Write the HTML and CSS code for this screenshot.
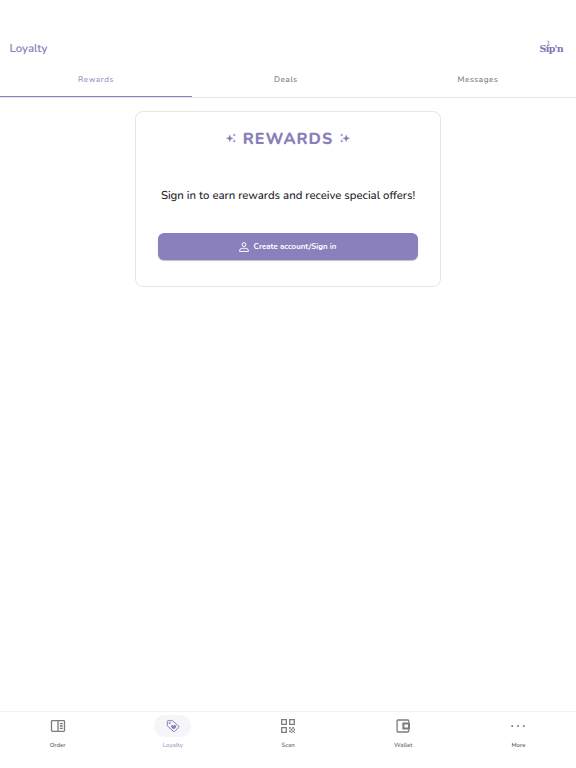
FILE: index.html
```
<!DOCTYPE html>
<html lang="en">
<head>
    <meta charset="UTF-8">
    <meta name="viewport" content="width=device-width, initial-scale=1.0">
    <title>Loyalty</title>
    <link rel="stylesheet" href="styles.css">
</head>
<body>
    <header class="header">
        <h1 class="page-title">Loyalty</h1>
        <div class="logo">
            <svg class="logo-steam" viewBox="0 0 6 8"><path d="M1.5 .8 4 2 2 4l2 1-1 2"/></svg>
            <span>Sip'n</span>
        </div>
    </header>

    <nav class="tabs">
        <a class="tab active" href="#"><span>Rewards</span></a>
        <a class="tab deals" href="#"><span>Deals</span></a>
        <a class="tab messages" href="#"><span>Messages</span></a>
    </nav>

    <main class="content">
        <section class="card">
            <div class="card-heading">
                <svg class="sparkle" viewBox="0 0 10 10"><path d="M3.8 1.5 4.9 4.2 7.6 5.3 4.9 6.4 3.8 9.1 2.7 6.4 0 5.3 2.7 4.2zM8.2 .2 8.7 1.4 9.9 1.9 8.7 2.4 8.2 3.6 7.7 2.4 6.5 1.9 7.7 1.4zM8.2 6.4 8.7 7.6 9.9 8.1 8.7 8.6 8.2 9.8 7.7 8.6 6.5 8.1 7.7 7.6z"/></svg>
                <h2>REWARDS</h2>
                <svg class="sparkle flipped" viewBox="0 0 10 10"><path d="M3.8 1.5 4.9 4.2 7.6 5.3 4.9 6.4 3.8 9.1 2.7 6.4 0 5.3 2.7 4.2zM8.2 .2 8.7 1.4 9.9 1.9 8.7 2.4 8.2 3.6 7.7 2.4 6.5 1.9 7.7 1.4zM8.2 6.4 8.7 7.6 9.9 8.1 8.7 8.6 8.2 9.8 7.7 8.6 6.5 8.1 7.7 7.6z"/></svg>
            </div>
            <p class="card-text">Sign in to earn rewards and receive special offers!</p>
            <button class="signin-button">
                <svg class="person" viewBox="0 0 10 10"><circle cx="5" cy="2.6" r="1.9"/><path d="M.6 9.4V8.2C.6 6.9 3 6.2 5 6.2s4.4.7 4.4 2v1.2z"/></svg>
                <span>Create account/Sign in</span>
            </button>
        </section>
    </main>

    <nav class="bottom-nav">
        <a class="nav-item" href="#">
            <span class="nav-icon">
                <svg viewBox="0 0 16 16"><path d="M2.3 2.7h11.4q.8 0 .8.8v9q0 .8-.8.8H2.3q-.8 0-.8-.8v-9q0-.8.8-.8zM8 2.7v10.6M9.8 5.6h3M9.8 8h3M9.8 10.4h3"/></svg>
            </span>
            <span class="nav-label">Order</span>
        </a>
        <a class="nav-item active" href="#">
            <span class="nav-icon">
                <svg viewBox="0 0 16 16"><path d="M2.9 2.7h4.6l6.3 5.6q.5.5 0 1L9.6 13.5q-.5.5-1 0L2.3 7.8V3.3q0-.6.6-.6z"/><circle class="solid" cx="4.7" cy="5" r=".9"/><path class="solid" d="M8.7 11.6 6.3 9.2C5.4 7.6 7.7 6.2 8.7 7.8c1-1.6 3.3-.2 2.4 1.4z"/></svg>
            </span>
            <span class="nav-label">Loyalty</span>
        </a>
        <a class="nav-item" href="#">
            <span class="nav-icon">
                <svg viewBox="0 0 16 16"><path d="M1.7 1.7h4.6v4.6H1.7zM9.7 1.7h4.6v4.6H9.7zM1.7 9.7h4.6v4.6H1.7z"/><path class="solid" d="M9 9h1.7v1.7H9zM12.4 9H14v1.7h-1.6zM10.7 10.7h1.7v1.7h-1.7zM14 10.7h1v1.7h-1zM9 12.4h1.7V14H9zM12.4 12.4H14V14h-1.6zM10.7 14h1.7v1h-1.7zM14 14h1v1h-1z"/></svg>
            </span>
            <span class="nav-label">Scan</span>
        </a>
        <a class="nav-item" href="#">
            <span class="nav-icon">
                <svg viewBox="0 0 16 16"><path d="M13.7 4.5V2.8q0-.8-.8-.8H2.9q-.8 0-.8.8v10.4q0 .8.8.8h10q.8 0 .8-.8v-1.7"/><path class="pocket" d="M8.4 5.5h5.6v5H8.4z"/></svg>
            </span>
            <span class="nav-label">Wallet</span>
        </a>
        <a class="nav-item" href="#">
            <span class="nav-icon">
                <svg viewBox="0 0 16 16"><g class="solid"><circle cx="2.2" cy="8" r="1"/><circle cx="8" cy="8" r="1"/><circle cx="13.8" cy="8" r="1"/></g></svg>
            </span>
            <span class="nav-label">More</span>
        </a>
    </nav>
</body>
</html>
```
FILE: styles.css
```
* {
    box-sizing: border-box;
}

body {
    margin: 0;
    height: 100vh;
    display: flex;
    flex-direction: column;
    background-color: #fff;
    color: #1c1b1f;
    font-family: Nunito, Lato, sans-serif;
    text-rendering: geometricPrecision;
}

a {
    text-decoration: none;
    color: inherit;
}

.header {
    height: 62px;
    padding: 36px 13px 0 9.5px;
    display: flex;
    justify-content: space-between;
    align-items: center;
}

.page-title {
    margin: 0;
    font-size: 11.4px;
    font-weight: 650;
    color: #8980bb;
}

.logo {
    position: relative;
    font-family: "DejaVu Serif", serif;
    font-size: 9.5px;
    font-weight: bold;
    letter-spacing: -0.7px;
    color: #8076b6;
}

.logo-steam {
    position: absolute;
    left: 6px;
    top: -4px;
    width: 5px;
    height: 7px;
    fill: none;
    stroke: currentColor;
    stroke-width: 0.8;
}

.tabs {
    height: 36px;
    display: flex;
    border-bottom: 1px solid #e5e5e8;
}

.tab {
    width: 33.333%;
    height: 35px;
    display: flex;
    justify-content: center;
    align-items: center;
    border-bottom: 1px solid transparent;
    font-size: 8px;
    font-weight: 500;
    letter-spacing: 0.6px;
    color: #77767a;
}

.tab.deals,
.tab.messages {
    padding-right: 4px;
}

.tab.active {
    border-color: #8b81bc;
    color: #9a92c5;
}

.content {
    flex: 1;
    padding-top: 13px;
}

.card {
    width: 306px;
    height: 176px;
    margin: 0 auto;
    padding: 17px 22px 0;
    border: 1px solid #e6e6e8;
    border-radius: 8px;
}

.card-heading {
    display: flex;
    justify-content: center;
    align-items: center;
    gap: 7px;
    height: 20px;
    color: #8980bb;
}

.card-heading h2 {
    margin: 0;
    font-size: 16px;
    font-weight: 850;
    letter-spacing: 1px;
}

.sparkle {
    width: 10px;
    height: 10px;
    margin-bottom: 3px;
    fill: currentColor;
}

.flipped {
    transform: scaleX(-1);
}

.card-text {
    margin: 38px 0 0;
    height: 18px;
    line-height: 18px;
    font-size: 11.4px;
    font-weight: 500;
    text-align: center;
    white-space: nowrap;
}

.signin-button {
    width: 100%;
    height: 27px;
    margin-top: 28px;
    padding: 0 1px 0 0;
    display: flex;
    justify-content: center;
    align-items: center;
    gap: 5px;
    border: none;
    border-radius: 6px;
    background-color: #8a80bc;
    box-shadow: 0 1px 1px rgba(0, 0, 0, 0.25);
    color: #fff;
    font-family: inherit;
    font-size: 7.9px;
    font-weight: 700;
    cursor: pointer;
}

.person {
    width: 10px;
    height: 10px;
    fill: none;
    stroke: currentColor;
    stroke-width: 1;
}

.bottom-nav {
    height: 57px;
    display: flex;
    border-top: 1px solid #f2f2f4;
}

.nav-item {
    flex: 1;
    display: flex;
    flex-direction: column;
    align-items: center;
    padding-top: 3px;
    color: #7c7b7f;
}

.nav-icon {
    width: 37px;
    height: 22px;
    display: flex;
    justify-content: center;
    align-items: center;
    border-radius: 11px;
}

.nav-icon svg {
    width: 16px;
    height: 16px;
    fill: none;
    stroke: currentColor;
    stroke-width: 1.3;
}

.nav-icon .solid {
    fill: currentColor;
    stroke: none;
}

.nav-icon .pocket {
    stroke-width: 2;
}

.nav-label {
    margin-top: 5px;
    line-height: 8px;
    font-size: 6px;
    font-weight: 600;
    color: #6c6b6f;
}

.nav-item.active {
    color: #8980bb;
}

.nav-item.active .nav-icon {
    background-color: #f6f5fa;
}

.nav-item.active .nav-icon svg {
    stroke-width: 1;
}

.nav-item.active .nav-label {
    color: #a49dca;
}
```
